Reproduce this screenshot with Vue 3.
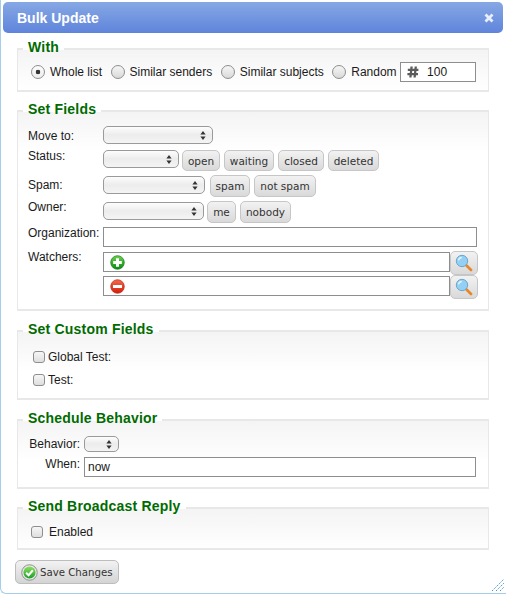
<script setup>
const statusButtons = [
  { label: "open", width: 38 },
  { label: "waiting", width: 50 },
  { label: "closed", width: 46 },
  { label: "deleted", width: 51 },
];
const spamButtons = [
  { label: "spam", width: 40 },
  { label: "not spam", width: 62 },
];
const ownerButtons = [
  { label: "me", width: 29 },
  { label: "nobody", width: 51 },
];
const sources = [
  { label: "Whole list", checked: true },
  { label: "Similar senders", checked: false },
  { label: "Similar subjects", checked: false },
  { label: "Random", checked: false },
];
</script>

<template>
  <div class="dialog">
    <div class="titlebar">
      <span class="title">Bulk Update</span>
      <svg class="close" width="10" height="10" viewBox="0 0 10 10">
        <path d="M1.5 1.5l7 7M8.5 1.5l-7 7" stroke="#e8eefb" stroke-width="2.8" />
      </svg>
    </div>

    <div class="content">
      <fieldset class="with">
        <legend>With</legend>
        <div class="with-row">
          <label v-for="s in sources" :key="s.label" class="radio-label">
            <input type="radio" name="source" :checked="s.checked" />
            <span>{{ s.label }}</span>
          </label>
          <div class="random-box">
            <svg class="hash" width="12" height="12" viewBox="0 0 12 12">
              <path d="M4.6 0.5L3.4 11.5M8.8 0.5L7.6 11.5M0.8 3.8H11.4M0.4 8.2H11" stroke="#5c5c5c" stroke-width="2.3" fill="none" />
            </svg>
            <span>100</span>
          </div>
        </div>
      </fieldset>

      <fieldset class="fields">
        <legend>Set Fields</legend>
        <div class="row row-move">
          <span class="lbl">Move to:</span>
          <select class="sel sel-move"></select>
        </div>
        <div class="row row-status">
          <span class="lbl">Status:</span>
          <select class="sel sel-status"></select>
          <button v-for="b in statusButtons" :key="b.label" class="btn" :style="{ width: b.width + 'px' }">{{ b.label }}</button>
        </div>
        <div class="row row-spam">
          <span class="lbl">Spam:</span>
          <select class="sel sel-spam"></select>
          <button v-for="b in spamButtons" :key="b.label" class="btn" :style="{ width: b.width + 'px' }">{{ b.label }}</button>
        </div>
        <div class="row row-owner">
          <span class="lbl">Owner:</span>
          <select class="sel sel-owner"></select>
          <button v-for="b in ownerButtons" :key="b.label" class="btn" :style="{ width: b.width + 'px' }">{{ b.label }}</button>
        </div>
        <div class="row row-org">
          <span class="lbl">Organization:</span>
          <input class="text org" type="text" />
        </div>
        <div class="row row-watch">
          <span class="lbl">Watchers:</span>
          <div class="text watch">
            <svg width="15" height="15" viewBox="0 0 15 15">
              <defs>
                <linearGradient id="g1" x1="0" y1="0" x2="0" y2="1">
                  <stop offset="0" stop-color="#6fd24a" />
                  <stop offset="1" stop-color="#078a14" />
                </linearGradient>
              </defs>
              <circle cx="7.5" cy="7.5" r="6.8" fill="url(#g1)" stroke="#17761f" stroke-width="0.7" />
              <path d="M7.5 3.2v8.6M3.2 7.5h8.6" stroke="#fff" stroke-width="3" />
            </svg>
          </div>
          <button class="search">
            <svg width="18" height="18" viewBox="0 0 18 18">
              <path d="M11 11l5 5" stroke="#e8862a" stroke-width="2.8" stroke-linecap="round" />
              <circle cx="7" cy="7" r="5.7" fill="#93d0f4" stroke="#6ea6ca" />
              <path d="M3.4 6.4a3.8 3.8 0 0 1 3.3-2.9" stroke="#e4f4fd" stroke-width="1.3" fill="none" />
            </svg>
          </button>
        </div>
        <div class="row row-watch2">
          <span class="lbl"></span>
          <div class="text watch">
            <svg width="15" height="15" viewBox="0 0 15 15">
              <defs>
                <linearGradient id="r1" x1="0" y1="0" x2="0" y2="1">
                  <stop offset="0" stop-color="#f4694a" />
                  <stop offset="1" stop-color="#d41c08" />
                </linearGradient>
              </defs>
              <circle cx="7.5" cy="7.5" r="6.8" fill="url(#r1)" stroke="#b82a14" stroke-width="0.7" />
              <path d="M3 7.5h9" stroke="#fff" stroke-width="3" />
            </svg>
          </div>
          <button class="search">
            <svg width="18" height="18" viewBox="0 0 18 18">
              <path d="M11 11l5 5" stroke="#e8862a" stroke-width="2.8" stroke-linecap="round" />
              <circle cx="7" cy="7" r="5.7" fill="#93d0f4" stroke="#6ea6ca" />
              <path d="M3.4 6.4a3.8 3.8 0 0 1 3.3-2.9" stroke="#e4f4fd" stroke-width="1.3" fill="none" />
            </svg>
          </button>
        </div>
      </fieldset>

      <fieldset class="custom">
        <legend>Set Custom Fields</legend>
        <label class="check-label"><input type="checkbox" /><span>Global Test:</span></label>
        <label class="check-label"><input type="checkbox" /><span>Test:</span></label>
      </fieldset>

      <fieldset class="schedule">
        <legend>Schedule Behavior</legend>
        <div class="row sched-row">
          <span class="sched-lbl">Behavior:</span>
          <select class="sel sel-behavior"></select>
        </div>
        <div class="row when-row">
          <span class="sched-lbl">When:</span>
          <input class="text when" type="text" value="now" />
        </div>
      </fieldset>

      <fieldset class="broadcast">
        <legend>Send Broadcast Reply</legend>
        <label class="check-label enabled"><input type="checkbox" /><span>Enabled</span></label>
      </fieldset>

      <button class="save">
        <svg width="17" height="17" viewBox="0 0 18 18">
          <defs>
            <linearGradient id="s1" x1="0" y1="0" x2="0" y2="1">
              <stop offset="0" stop-color="#8fe05c" />
              <stop offset="1" stop-color="#16a02a" />
            </linearGradient>
          </defs>
          <circle cx="9" cy="9" r="8.2" fill="#e8e8e8" stroke="#8a8a8a" />
          <circle cx="9" cy="9" r="6.4" fill="url(#s1)" />
          <path d="M5.4 9.2l2.6 2.6 4.6-5.2" stroke="#fff" stroke-width="2.2" fill="none" />
        </svg>
        <span>Save Changes</span>
      </button>
    </div>

    <svg class="grip" width="12" height="12" viewBox="0 0 12 12">
      <path d="M0 12L12 0M4 12L12 4M8 12L12 8" stroke="#4a90d9" stroke-width="1" stroke-dasharray="1.4 1" />
    </svg>
  </div>
</template>

<style>
html, body {
  margin: 0;
  background: #fff;
}
</style>

<style scoped>
* {
  box-sizing: border-box;
}
.dialog {
  position: relative;
  width: 506px;
  height: 594px;
  padding: 2px 2px 0 2px;
  background: #fff;
  border-left: 1px solid #a6cde9;
  border-bottom: 1px solid #a6cde9;
  border-radius: 0 0 0 6px;
  font-family: "Liberation Sans", Arial, sans-serif;
  font-size: 12px;
  color: #1a1a1a;
  overflow: hidden;
}
.titlebar {
  display: flex;
  align-items: center;
  justify-content: space-between;
  width: 500px;
  height: 31px;
  padding: 0 9px 0 14px;
  border-radius: 5px;
  background: linear-gradient(#86a8e4, #5f84db);
}
.title {
  color: #fff;
  font-weight: bold;
  font-size: 14px;
}
.content {
  padding: 0 0 0 14px;
}
fieldset {
  width: 472px;
  margin: 0;
  padding: 0;
  border-style: solid;
  border-width: 2px 1px;
  border-color: #e8e8e8;
  background: linear-gradient(#f4f4f4, #fff 40px);
  background-clip: padding-box;
  min-width: 0;
}
legend {
  margin-left: 5px;
  padding: 0 5px 4px;
  font-size: 14px;
  font-weight: bold;
  letter-spacing: 0.2px;
  color: #006b00;
  line-height: 16px;
}
.with {
  margin-top: 6px;
  height: 53px;
}
.with-row {
  display: flex;
  align-items: center;
  padding: 0 0 0 13px;
  margin-top: 3px;
}
.radio-label {
  display: flex;
  align-items: center;
  gap: 5px;
  margin-right: 8.5px;
}
input[type="radio"] {
  appearance: none;
  width: 14px;
  height: 14px;
  margin: 0;
  border: 1px solid #8e8e8e;
  border-radius: 50%;
  background: linear-gradient(#f6f6f6, #d9d9d9);
}
input[type="radio"]:checked {
  background: radial-gradient(circle, #333 0, #333 2px, transparent 2.6px), linear-gradient(#fdfdfd, #ececec);
}
.random-box {
  display: flex;
  align-items: center;
  width: 76px;
  height: 20px;
  margin-left: -5px;
  border: 1px solid #8e8e8e;
  background: #fff;
  padding-left: 6px;
  font-size: 12px;
}
.hash {
  margin-right: 8px;
}
.fields {
  margin-top: 9px;
  height: 210px;
}
.row {
  display: flex;
}
.lbl {
  width: 75px;
  margin-left: 10px;
  flex: none;
  line-height: 14px;
  margin-top: -1px;
}
.row-move {
  margin-top: 5px;
}
.row-move .lbl,
.row-spam .lbl {
  margin-top: 3px;
}
.row-status {
  margin-top: 6px;
}
.row-spam,
.row-owner,
.row-org,
.row-watch {
  margin-top: 4px;
}
.sel {
  appearance: none;
  height: 18px;
  flex: none;
  border: 1px solid #9a9a9a;
  border-radius: 5px;
  background-color: #f2f2f2;
  background-image:
    url("data:image/svg+xml;utf8,<svg xmlns='http://www.w3.org/2000/svg' width='6' height='9'><path d='M3 0L5.6 3.4H.4zM3 9L.4 5.6h5.2z' fill='%23333'/></svg>"),
    linear-gradient(#fdfdfd, #ececec 50%, #f4f4f4);
  background-repeat: no-repeat;
  background-position: right 6px center, 0 0;
}
.sel-move {
  width: 110px;
}
.sel-status {
  width: 76px;
  margin-right: -1px;
}
.sel-spam {
  width: 102px;
  margin-top: 1px;
  margin-right: 1px;
}
.sel-owner {
  width: 101px;
  margin-top: 1px;
  margin-right: -1px;
}
.sel-behavior {
  width: 35px;
  height: 16px;
}
.btn {
  height: 21px;
  margin: 0 0 0 4px;
  padding: 0;
  border: 1px solid #c6c6c6;
  border-radius: 5px;
  background: linear-gradient(#f2f2f2, #d9d9d9);
  font-family: "DejaVu Sans", sans-serif;
  font-size: 10.5px;
  color: #333;
}
.row-spam .btn,
.row-owner .btn {
  height: 22px;
}
.text {
  height: 20px;
  margin: 0;
  border: 1px solid #8e8e8e;
  background: #fff;
  font-family: "Liberation Sans", Arial, sans-serif;
  font-size: 12px;
  color: #1a1a1a;
  outline: none;
}
.org {
  width: 374px;
}
.watch {
  display: flex;
  align-items: center;
  width: 347px;
  margin-top: 1px;
  padding-left: 6px;
}
.search {
  display: flex;
  align-items: center;
  justify-content: center;
  width: 28px;
  height: 24px;
  margin: 0;
  padding: 0;
  border: 1px solid #c6c6c6;
  border-radius: 5px;
  background: linear-gradient(#f2f2f2, #d9d9d9);
}
.check-label {
  display: flex;
  align-items: center;
  gap: 3px;
  margin: 9px 0 0 15px;
}
.check-label + .check-label {
  margin-top: 9px;
}
input[type="checkbox"] {
  appearance: none;
  width: 12px;
  height: 12px;
  margin: 0;
  border: 1px solid #8e8e8e;
  border-radius: 3px;
  background: linear-gradient(#f6f6f6, #dedede);
}
.custom {
  margin-top: 10px;
  height: 79px;
}
.schedule {
  margin-top: 10px;
  height: 79px;
}
.sched-lbl {
  width: 62px;
  text-align: right;
  line-height: 14px;
  flex: none;
}
.sched-row {
  align-items: center;
  gap: 4px;
  margin-top: 6px;
}
.when-row {
  gap: 4px;
  margin-top: 5px;
}
.when {
  width: 392px;
  padding: 0 3px;
}
.broadcast {
  margin-top: 9px;
  height: 52px;
}
.enabled {
  margin: 7px 0 0 13px;
  gap: 6px;
}
.save {
  display: flex;
  align-items: center;
  gap: 2px;
  width: 104px;
  height: 24px;
  margin: 10px 0 0 -2px;
  padding: 0 0 0 5px;
  border: 1px solid #bdbdbd;
  border-radius: 5px;
  background: linear-gradient(#f2f2f2, #d4d4d4);
  font-family: "DejaVu Sans", sans-serif;
  font-size: 10.2px;
  color: #333;
  white-space: nowrap;
}
.grip {
  position: absolute;
  right: 2px;
  bottom: 2px;
}
</style>
